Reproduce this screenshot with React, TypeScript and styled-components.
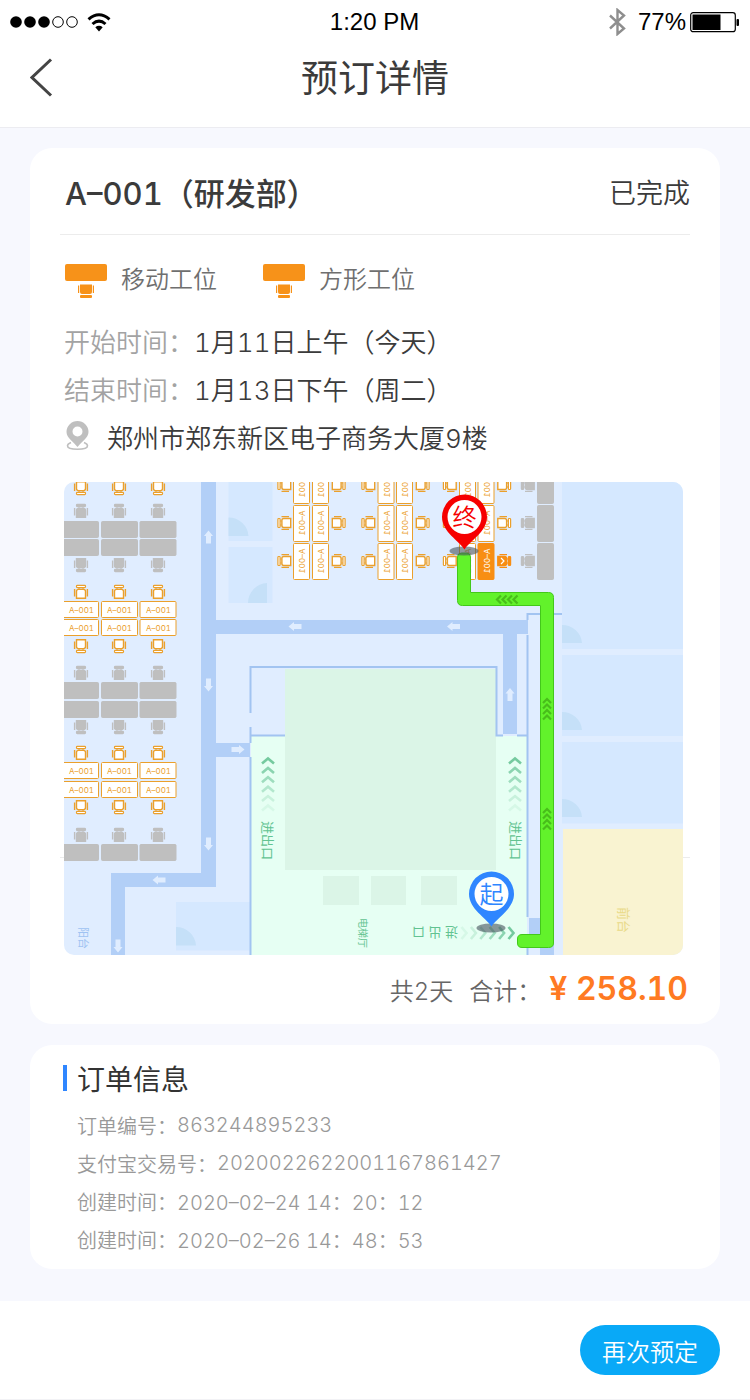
import React from 'react';
import styled, { createGlobalStyle } from 'styled-components';

const sans = '"Inter", "Noto Sans CJK SC", sans-serif';

const GlobalStyle = createGlobalStyle`
  * { box-sizing: border-box; }
  body {
    margin: 0;
    background: #f7f8fe;
    color: #3b3b3b;
    font-family: ${sans};
    font-weight: 350;
    font-variant-numeric: tabular-nums;
  }
  h1, h2, p, dl, dt, dd, ul { margin: 0; padding: 0; }
`;

const Page = styled.div`
  display: flex;
  flex-direction: column;
  min-height: 100vh;
`;

const TopBar = styled.header`
  background: #fff;
  border-bottom: 1px solid #ececf1;
`;

const StatusBar = styled.div`
  display: grid;
  grid-template-columns: 1fr auto 1fr;
  align-items: center;
  height: 44px;
  padding: 0 11px 0 10px;
  color: #000;
  font-family: "Liberation Sans", Arial, sans-serif;
  font-size: 24px;
  font-weight: 400;
`;

const StatusGroup = styled.div<{ $end?: boolean }>`
  display: flex;
  align-items: center;
  gap: ${(p) => (p.$end ? 4 : 8)}px;
  justify-content: ${(p) => (p.$end ? 'flex-end' : 'flex-start')};
`;

const Bluetooth = styled.svg`
  margin-right: 8px;
`;

const NavBar = styled.div`
  display: grid;
  grid-template-columns: 60px 1fr 60px;
  align-items: center;
  height: 83px;
  padding: 0 20px 16px;
`;

const BackButton = styled.button`
  display: flex;
  padding: 4px 10px;
  border: 0;
  background: none;
  cursor: pointer;
`;

const PageTitle = styled.h1`
  padding-top: 2px;
  font-size: 37px;
  line-height: 48px;
  font-weight: 400;
  text-align: center;
`;

const Main = styled.main`
  display: flex;
  flex: 1;
  flex-direction: column;
  gap: 21px;
  padding: 20px 30px 32px;
`;

const Card = styled.section`
  border-radius: 22px;
  background: #fff;
`;

const BookingCard = styled(Card)`
  padding: 0 30px 12px;
`;

const CardHead = styled.div`
  display: flex;
  align-items: center;
  justify-content: space-between;
  height: 87px;
  padding: 6px 0 0 5px;
  border-bottom: 1px solid #ececec;
`;

const Desk = styled.h2`
  font-size: 31px;
  line-height: 40px;
  font-weight: 500;
`;

const Status = styled.span`
  font-size: 27px;
  line-height: 40px;
`;

const Legend = styled.ul`
  display: flex;
  gap: 46px;
  padding: 28px 5px 0;
  list-style: none;
`;

const LegendItem = styled.li`
  display: flex;
  align-items: flex-start;
  gap: 14px;
  height: 36px;
  color: #6f6f6f;
  font-size: 24px;
  line-height: 34px;
`;

const Facts = styled.dl`
  padding: 17px 4px 0;
`;

const Fact = styled.div`
  display: flex;
  align-items: center;
  height: 48px;
  font-size: 26px;
`;

const FactLabel = styled.dt`
  color: #a3a3a3;
`;

const Address = styled.p`
  display: flex;
  align-items: center;
  gap: 17px;
  height: 48px;
  padding: 0 5px;
  font-size: 26px;
`;

const MapFrame = styled.div`
  margin-top: 22px;
  padding: 0 7px 0 4px;
  background: linear-gradient(#ececec, #ececec) 0 375px / 100% 1px no-repeat;
`;

const FloorMap = styled.svg`
  display: block;
  width: 100%;
  height: auto;
  border-radius: 10px;
  font-family: ${sans};
`;

const Total = styled.p`
  display: flex;
  align-items: center;
  justify-content: flex-end;
  height: 57px;
  padding: 0 2px;
  color: #666;
  font-size: 24px;
`;

const Days = styled.span`
  padding-top: 12px;
  margin-right: 16px;
`;

const SumLabel = styled.span`
  padding-top: 12px;
`;

const Price = styled.strong`
  margin-left: 8px;
  padding-top: 10px;
  color: #ff7a22;
  font-size: 32px;
  font-weight: 600;
`;

const OrderCard = styled(Card)`
  padding: 13px 33px 11px;
`;

const OrderTitle = styled.h2`
  display: flex;
  align-items: center;
  gap: 10px;
  height: 40px;
  font-size: 28px;
  font-weight: 400;
  color: #333;

  &::before {
    content: "";
    width: 4px;
    height: 26px;
    background: #2f86ff;
  }
`;

const OrderList = styled.dl`
  padding: 8px 14px 0;
`;

const OrderRow = styled.div`
  display: flex;
  align-items: center;
  height: 38px;
  color: #999;
  font-size: 20px;
`;

const Footer = styled.footer`
  display: flex;
  align-items: center;
  justify-content: flex-end;
  height: 99px;
  padding: 0 30px;
  background: #fff;
  border-bottom: 1px solid #f2f2f5;
`;

const RebookButton = styled.button`
  height: 50px;
  padding: 0 22px;
  border: 0;
  border-radius: 25px;
  background: #09a9f7;
  color: #fff;
  font: inherit;
  font-size: 24px;
  cursor: pointer;
`;

const ORANGE = '#eba02c';
const GRAY = '#bfbfbf';

type ChairProps = { x: number; y: number; turn: number; tone?: 'open' | 'taken' | 'picked' };

/* A chair seen from above; at turn 0 its base points down. */
function Chair({ x, y, turn, tone = 'open' }: ChairProps) {
  const line = tone === 'open' ? ORANGE : tone === 'taken' ? GRAY : '#f88e13';
  const fill = tone === 'open' ? '#fff' : line;
  return (
    <g transform={`translate(${x} ${y}) rotate(${turn})`} stroke={line} fill={fill}>
      <path d="M-4.5 -6.2H4.5V0.6Q4.5 2.6 2.5 2.6H-2.5Q-4.5 2.6 -4.5 0.6Z" strokeWidth="1.4" />
      <path d="M-6.4 -4.5V3M6.4 -4.5V3" strokeWidth="1.4" fill="none" />
      <path d="M-2 3V4.4M2 3V4.4" strokeWidth="1" />
      <rect x="-4.5" y="4.4" width="9" height="2.2" rx="0.8" strokeWidth="1.2" />
      {tone === 'picked' && <path d="M-3 -3L0 0L3 -3" stroke="#fff" strokeWidth="1.2" />}
    </g>
  );
}

const columns = [
  { desk: 62, w: 37, cx: 81 },
  { desk: 101, w: 37, cx: 119 },
  { desk: 139.5, w: 37, cx: 158 },
];

function DeskRow({ y, open }: { y: number; open?: boolean }) {
  return (
    <>
      {columns.map((c) => (
        <g key={c.desk}>
          <rect x={c.desk + 0.5} y={y + 0.5} width={c.w - 1} height="16" rx="1" fill={open ? '#fff' : GRAY} stroke={open ? ORANGE : GRAY} />
          {open && <text x={c.cx + 0.5} y={y + 11.5} fontSize="8" fontWeight="400" fill={ORANGE} textAnchor="middle">A–001</text>}
        </g>
      ))}
    </>
  );
}

function ChairRow({ y, turn, tone }: { y: number; turn: number; tone?: 'open' | 'taken' }) {
  return <>{columns.map((c) => <Chair key={c.cx} x={c.cx} y={y} turn={turn} tone={tone} />)}</>;
}

const tallRows = [485, 523, 561];

function TallDesk({ x, y, tone }: { x: number; y: number; tone: 'open' | 'taken' | 'picked' }) {
  const fill = tone === 'open' ? '#fff' : tone === 'taken' ? GRAY : '#f88e13';
  const line = tone === 'open' ? ORANGE : fill;
  return (
    <g>
      <rect x={x + 0.5} y={y - 17.5} width="16" height="36" rx="1" fill={fill} stroke={line} />
      {tone !== 'taken' && (
        <text transform={`translate(${x + 12} ${y}) rotate(90) scale(1 -1)`} fontSize="8" fontWeight="400" fill={tone === 'picked' ? '#fff' : ORANGE} textAnchor="middle">A–001</text>
      )}
    </g>
  );
}

const arrows: [number, number, number][] = [
  [208.5, 537, 0], [208.5, 685, 180], [208.5, 844, 180], [295, 626.5, 270], [453.5, 626.5, 270],
  [238, 749.5, 90], [159, 880, 270], [118, 946, 180], [510, 694.5, 0],
];

const fades = [0.75, 0.6, 0.48, 0.34, 0.2, 0.1];

function FadingChevrons({ x, y, turn, step }: { x: number; y: number; turn: number; step: number }) {
  return (
    <g transform={`translate(${x} ${y}) rotate(${turn})`} fill="none" stroke="#4fb883" strokeWidth="2.6">
      {fades.map((o, i) => <path key={o} opacity={o} d={`M-6 ${6.5 + i * step}L0 ${1.5 + i * step}L6 ${6.5 + i * step}`} />)}
    </g>
  );
}

function RouteChevrons({ x, y, turn }: { x: number; y: number; turn: number }) {
  return (
    <g transform={`translate(${x} ${y}) rotate(${turn})`} fill="none" stroke="#48bd1b" strokeWidth="2.2">
      {[-11, -5.5, 0, 5.5].map((d) => <path key={d} d={`M-4 ${d + 5}L0 ${d + 1}L4 ${d + 5}`} />)}
    </g>
  );
}

function MapPin({ x, y, color, label }: { x: number; y: number; color: string; label: string }) {
  return (
    <g transform={`translate(${x} ${y})`}>
      <ellipse cx="-0.5" cy="34" rx="14.5" ry="4.6" fill="#45525c" opacity="0.6" />
      <path d="M0 32.500C-5 24 -22.500 15 -22.500 0A22.500 22.500 0 0 1 22.500 0C22.500 15 5 24 0 32.500Z" fill={color} />
      <circle r="17" fill="#fff" />
      <text y="8.500" fontSize="24" fill={color} textAnchor="middle">{label}</text>
    </g>
  );
}

function OfficeMap() {
  return (
    <FloorMap viewBox="64 482 619 473" role="img" aria-label="工位路线图">
      <rect x="64" y="482" width="619" height="473" fill="#e0edff" />

      <g fill="#d5e8ff">
        <path d="M228.500 482H272.500V541H228.500ZM228.500 547H272.500V603H228.500ZM176 902H250V950.500H176Z" />
        <path d="M562 482H683V649H562ZM562 655H683V736H562ZM562 742H683V823.500H562Z" />
      </g>
      <g fill="#c5e0f8">
        <path d="M228.500 536V517.500A20 20 0 0 1 248.500 536ZM267 603V583A20 20 0 0 0 248 603Z" />
        <path d="M176 945.500V927A20 20 0 0 1 196 945.500ZM562 643V625A20 19 0 0 1 582 643Z" />
        <path d="M562 730V712A20 19 0 0 1 582 730ZM562 817V799A20 19 0 0 1 582 817Z" />
      </g>
      <rect x="563" y="829" width="120" height="126" fill="#f9f3d1" />

      <g fill="#b2cff7">
        <path d="M201 482H216V620H528V634H517V734H503V634H216V743H250V757H216V887H125V955H111V873H201Z" />
        <path d="M529 918H554V955H540V934H529Z" />
      </g>
      <g fill="#e0edff">
        {arrows.map(([x, y, turn]) => (
          <path key={`${x}-${y}`} transform={`translate(${x} ${y}) rotate(${turn})`} d="M0 -6.500L4.500 -1H2.500V6.500H-2.500V-1H-4.500Z" />
        ))}
      </g>

      <rect x="251" y="736" width="276" height="219" fill="#e6fff3" />
      <rect x="285" y="669" width="211" height="201" fill="#dbf5e7" />
      <path d="M323 876H359V905H323ZM371 876H406V905H371ZM421 876H457V905H421Z" fill="#dbf5e7" />
      <g fill="none" stroke="#a2c4f1" strokeWidth="2">
        <path d="M250.500 713V667H496.500V735.500H503M250.500 727V743M250.500 757V955M250.500 735.500H285" />
        <path d="M517 735.500H527.500M527.500 620V614H562M527.500 635V917M527.500 948V955" />
      </g>

      <FadingChevrons x={268} y={757} turn={0} step={9.4} />
      <FadingChevrons x={515} y={757} turn={0} step={9.4} />
      <FadingChevrons x={515} y={933} turn={90} step={9.4} />
      <g fill="#62c391" fontWeight="400">
        <text transform="translate(263 821) rotate(90)" fontSize="13">进出口</text>
        <text transform="translate(510.500 821) rotate(90)" fontSize="13">进出口</text>
        <text transform="translate(359 918) rotate(90)" fontSize="10">电梯厅</text>
        <text transform="translate(458 928) rotate(180)" fontSize="13">进 出 口</text>
      </g>
      <text transform="translate(79 927) rotate(90)" fontSize="11" fontWeight="400" fill="#9fc3f2">阳台</text>
      <text transform="translate(619 907) rotate(90)" fontSize="13" fontWeight="400" fill="#e9da88">前台</text>

      <ChairRow y={488} turn={0} />
      <ChairRow y={511} turn={180} tone="taken" />
      <DeskRow y={521} />
      <DeskRow y={539} />
      <ChairRow y={565} turn={0} tone="taken" />
      <ChairRow y={592} turn={180} />
      <DeskRow y={601} open />
      <DeskRow y={619} open />
      <ChairRow y={646} turn={0} />
      <ChairRow y={673} turn={180} tone="taken" />
      <DeskRow y={682} />
      <DeskRow y={701} />
      <ChairRow y={727} turn={0} tone="taken" />
      <ChairRow y={753} turn={180} />
      <DeskRow y={762} open />
      <DeskRow y={781} open />
      <ChairRow y={807} turn={0} />
      <ChairRow y={835} turn={180} tone="taken" />
      <DeskRow y={844} />

      {tallRows.map((y) => (
        <g key={y}>
          {[293, 312, 377.5, 396, 459, 477.5].map((x) => (
            <TallDesk key={x} x={x} y={y} tone={x === 477.5 && y === 561 ? 'picked' : 'open'} />
          ))}
          <TallDesk x={537} y={y} tone="taken" />
          {[284.5, 368.5, 450].map((x) => <Chair key={x} x={x} y={y} turn={90} />)}
          {[338.5, 422.5, 504].map((x) => (
            <Chair key={x} x={x} y={y} turn={270} tone={x === 504 && y === 561 ? 'picked' : 'open'} />
          ))}
          <Chair x={528} y={y} turn={90} tone="taken" />
        </g>
      ))}

      <path
        d="M457.500 557Q457.500 553 461.500 553H466.500Q470.500 553 470.500 557V592.500H548.500Q553.500 592.500 553.500 597.500V943Q553.500 947.500 548.500 947.500H522Q517.500 947.500 517.500 943V939Q517.500 934.500 522 934.500H540.500V605.500H462.500Q457.500 605.500 457.500 600.500Z"
        fill="#62f22b"
        stroke="#43c81a"
      />
      <RouteChevrons x={507} y={599.5} turn={270} />
      <RouteChevrons x={547} y={709} turn={0} />
      <RouteChevrons x={547} y={819} turn={0} />
      <MapPin x={464.5} y={517} color="#f60000" label="终" />
      <MapPin x={491.5} y={894} color="#2f86ff" label="起" />
    </FloorMap>
  );
}

function DeskIcon() {
  return (
    <svg width="42" height="36" viewBox="0 0 42 36" fill="#f79219" aria-hidden="true">
      <rect y="1" width="42" height="17" rx="2" />
      <path d="M15 21.500H27V29Q27 31 25 31H17Q15 31 15 29ZM13 22.500H14.200V30H13ZM27.800 22.500H29V30H27.800Z" />
      <rect x="15" y="32" width="12" height="3" rx="1" />
    </svg>
  );
}

function PlaceIcon() {
  return (
    <svg width="25" height="30" viewBox="0 0 25 30" fill="#bfbfbf" aria-hidden="true">
      <path fillRule="evenodd" d="M12.500 0A11 11 0 0 1 23.500 11C23.500 17 17 20 12.500 26C8 20 1.500 17 1.500 11A11 11 0 0 1 12.500 0ZM12.500 5.500A5 5 0 1 0 12.500 15.500A5 5 0 1 0 12.500 5.500Z" />
      <path d="M6 21.500Q2.500 23 2.500 24.800C2.500 27 7 28.300 12.500 28.300S22.500 27 22.500 24.800Q22.500 23 19 21.500" fill="none" stroke="#bfbfbf" strokeWidth="1.600" />
    </svg>
  );
}

const orderRows = [
  ['订单编号：', '863244895233'],
  ['支付宝交易号：', '2020022622001167861427'],
  ['创建时间：', '2020–02–24 14：20：12'],
  ['创建时间：', '2020–02–26 14：48：53'],
];

export default function App() {
  return (
    <Page>
      <GlobalStyle />
      <TopBar>
        <StatusBar>
          <StatusGroup>
            <svg width="69" height="14" viewBox="0 0 69 14" aria-hidden="true">
              <circle cx="6" cy="7" r="5.800" />
              <circle cx="20" cy="7" r="5.800" />
              <circle cx="34" cy="7" r="5.800" />
              <circle cx="48" cy="7" r="5.300" fill="none" stroke="#000" />
              <circle cx="62" cy="7" r="5.300" fill="none" stroke="#000" />
            </svg>
            <svg width="24" height="19" viewBox="0 0 24 19" fill="none" stroke="#000" strokeWidth="3" aria-hidden="true">
              <path d="M1.500 6.300Q12 -2.800 22.500 6.300" />
              <path d="M5.500 11Q12 5.200 18.500 11" />
              <path d="M12 18.500L8.300 14.300Q12 11.400 15.700 14.300Z" fill="#000" stroke="none" />
            </svg>
          </StatusGroup>
          <span>1:20 PM</span>
          <StatusGroup $end>
            <Bluetooth width="17" height="28" viewBox="0 0 17 28" fill="none" stroke="#8e8e8e" strokeWidth="2.4" aria-hidden="true">
              <path d="M1 7.500L15 20.500L8.500 26V2L15 7.500L1 20.500" />
            </Bluetooth>
            <span>77%</span>
            <svg width="49" height="21" viewBox="0 0 49 21" aria-hidden="true">
              <rect x="0.700" y="0.700" width="44.600" height="19" rx="2.500" fill="none" stroke="#000" strokeWidth="1.200" />
              <rect x="2.500" y="2.500" width="28" height="15.500" />
              <rect x="46.500" y="7" width="2.500" height="7" rx="1" />
            </svg>
          </StatusGroup>
        </StatusBar>
        <NavBar>
          <BackButton type="button" aria-label="返回">
            <svg width="24" height="40" viewBox="0 0 24 40" fill="none" stroke="#444" strokeWidth="3">
              <path d="M21 1.500L2 19.500L21 37.500" />
            </svg>
          </BackButton>
          <PageTitle>预订详情</PageTitle>
        </NavBar>
      </TopBar>

      <Main>
        <BookingCard>
          <CardHead>
            <Desk>A–001（研发部）</Desk>
            <Status>已完成</Status>
          </CardHead>
          <Legend>
            <LegendItem><DeskIcon />移动工位</LegendItem>
            <LegendItem><DeskIcon />方形工位</LegendItem>
          </Legend>
          <Facts>
            <Fact><FactLabel>开始时间：</FactLabel><dd>1月11日上午（今天）</dd></Fact>
            <Fact><FactLabel>结束时间：</FactLabel><dd>1月13日下午（周二）</dd></Fact>
          </Facts>
          <Address><PlaceIcon />郑州市郑东新区电子商务大厦9楼</Address>
          <MapFrame><OfficeMap /></MapFrame>
          <Total>
            <Days>共2天</Days>
            <SumLabel>合计：</SumLabel>
            <Price>¥ 258.10</Price>
          </Total>
        </BookingCard>

        <OrderCard>
          <OrderTitle>订单信息</OrderTitle>
          <OrderList>
            {orderRows.map(([label, value]) => (
              <OrderRow key={value}><dt>{label}</dt><dd>{value}</dd></OrderRow>
            ))}
          </OrderList>
        </OrderCard>
      </Main>

      <Footer>
        <RebookButton type="button">再次预定</RebookButton>
      </Footer>
    </Page>
  );
}
